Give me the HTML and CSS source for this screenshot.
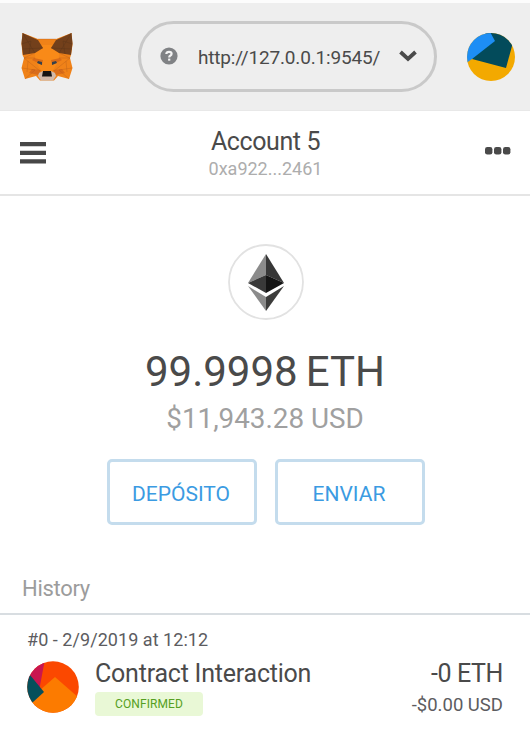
FILE: index.html
```html
<!DOCTYPE html>
<html lang="es">
<head>
<meta charset="utf-8">
<title>Wallet</title>
<link rel="stylesheet" href="styles.css">
</head>
<body>
<header class="topbar">
  <svg class="fox" viewBox="20 32 54 50" width="54" height="50">
    <path fill="#f08218" d="M22.5 33 38 39H56L71.5 33 72.5 45 71 55 70 58 72.5 68 69 79 58 76 54 80.5H40L36 76 25 79 21.5 68 24 58 22.5 55 21.5 44Z"/>
    <path fill="#f98a18" d="M34 49 42 45H52L60 49 58 62 52 72H42L36 62Z"/>
    <path fill="#73401b" d="M22.5 33 38 40 43 48 35 53 23 55 21.5 43ZM71.5 33 56 40 51 48 59 53 71 55 72.5 43Z"/>
    <path fill="#d96c19" d="M34 58 43 60 42 65 32 60ZM60 58 51 60 52 65 62 60ZM32 69 41 70 38 75 29 73ZM62 69 53 70 56 75 65 73Z"/>
    <path fill="none" stroke="#54301a" stroke-width=".5" opacity=".65" d="M22.5 33 35 53M21.5 44 31 41 29 54M22 49 43 48M71.5 33 59 53M72.5 44 63 41 65 54M72 49 51 48"/>
    <path fill="none" stroke="#a8551a" stroke-width=".5" opacity=".6" d="M38 39H56M35 53 24 58 40 71M59 53 70 58 54 71M22 68 35 70 25 79M72 68 59 70 69 79M24 58 35 58M70 58 59 58M28 61 27 72M66 61 67 72"/>
    <path fill="#d2b9a8" d="M39 73 43 71H51L55 73 56 76 53 80.5H41L38 76Z"/>
    <path fill="#36414c" d="M38 61 42 62 42 65 37 63ZM56 61 52 62 52 65 57 63Z"/>
    <path fill="#171413" d="M43 71H51L52 76.5H42Z"/>
  </svg>
  <div class="network">
    <svg class="help" viewBox="0 0 18 18" width="18" height="18"><circle cx="9" cy="9" r="8.6" fill="#808285"/><path d="M6.3 7Q6.5 4.8 9 4.8 11.6 4.8 11.6 6.8 11.6 8 10.2 8.7 9.2 9.2 9.2 10.4" fill="none" stroke="#f3f3f3" stroke-width="2.2"/><path d="M8.1 11.6h2.2v2.1H8.1z" fill="#f3f3f3"/></svg>
    <span class="url">http://127.0.0.1:9545/</span>
    <svg class="chevron" viewBox="0 0 18 12" width="18" height="12"><path d="M1.5 2 9 9 16.5 2" fill="none" stroke="#4a4a4a" stroke-width="3.8"/></svg>
  </div>
  <svg class="avatar" viewBox="0 0 48 48" width="48" height="48">
    <clipPath id="user-circle"><circle cx="24" cy="24" r="24"/></clipPath>
    <g clip-path="url(#user-circle)"><path fill="#f3a900" d="M0 0h48v48H0z"/><path fill="#034b5b" d="M20-3H52L45 13 39 35 5 26Z"/><path fill="#1d8ef5" d="M-2 31V-3H22L28 8 5 26Z"/></g>
  </svg>
</header>
<section class="account">
  <svg class="menu" viewBox="0 0 26 22" width="26" height="22"><path fill="#474747" d="M0 0h26v4.3H0zM0 8.7h26V13H0zM0 17.3h26v4.3H0z"/></svg>
  <div class="identity"><div class="name">Account 5</div><div class="address">0xa922...2461</div></div>
  <svg class="more" viewBox="0 0 26 8" width="26" height="8"><g fill="#4a4a4a"><rect width="7.4" height="7.6" rx="2.3"/><rect x="9" width="7.4" height="7.6" rx="2.3"/><rect x="18" width="7.4" height="7.6" rx="2.3"/></g></svg>
</section>
<main class="balance">
  <svg class="token" viewBox="0 0 76 76" width="76" height="76"><circle cx="38" cy="38" r="37" fill="#fff" stroke="#e2e2e2" stroke-width="1.8"/><path fill="#8b8b8b" d="M38 10 20 39 38 31Z"/><path fill="#373737" d="M38 10 56 39 38 31Z"/><path fill="#393939" d="M20 39 38 31V49Z"/><path fill="#141414" d="M56 39 38 31V49Z"/><path fill="#8b8b8b" d="M20 42 38 53V67Z"/><path fill="#3c3c3b" d="M56 42 38 53V67Z"/></svg>
  <div class="eth"><span class="amount">99.9998</span><span class="unit">ETH</span></div>
  <div class="fiat">$11,943.28 USD</div>
  <div class="actions"><button><span class="deposit">DEPÓSITO</span></button><button><span class="send">ENVIAR</span></button></div>
</main>
<section class="history">
  <h2><span>History</span></h2>
  <div class="transaction">
    <div class="date"><span>#0 - 2/9/2019 at 12:12</span></div>
    <div class="details">
      <svg class="contract" viewBox="0 0 52 52" width="52" height="52"><clipPath id="contract-circle"><circle cx="26" cy="26" r="25.8"/></clipPath><g clip-path="url(#contract-circle)"><path fill="#fb4800" d="M0 0h52v52H0z"/><path fill="#c9164f" d="M-2-2H18L12 30-2 18Z"/><path fill="#fc7b00" d="M28 16 52 37V56H0V46L12 30Z"/><path fill="#064f5b" d="M3 14 17 31 5 42-4 46V14Z"/></g></svg>
      <div class="description"><div class="title"><span>Contract Interaction</span></div><div class="status">CONFIRMED</div></div>
      <div class="values"><div class="value">-0 ETH</div><div class="usd">-$0.00 USD</div></div>
    </div>
  </div>
</section>
</body>
</html>
```
FILE: styles.css
```css
* { box-sizing: border-box; }
body { margin: 0; background: #fff; color: #4a4a4a; font-family: Roboto, "Liberation Sans", sans-serif; overflow: hidden; }
svg { display: block; flex: none; }
.topbar { height: 111px; border-top: 3px solid #fcfcfc; border-bottom: 1px solid #e8e8e8; background: #eee; display: flex; padding: 0 14px 0 20px; }
.fox { margin-top: 29px; }
.network { margin: 18px 0 0 64px; width: 299px; height: 71px; border: 3px solid #c9c9c9; border-radius: 36px; display: flex; align-items: center; padding: 0 15px 0 19px; }
.help { margin-top: -1px; }
.url { margin-left: 20px; width: 184px; font-size: 19px; line-height: 24px; white-space: nowrap; letter-spacing: -.18px; margin-top: 2px; }
.chevron { margin: -1px 0 0 17px; }
.avatar { margin: 30px 0 0 30px; }
.account { height: 85px; border-bottom: 2px solid #e5e5e5; display: flex; padding: 0 19px 0 20px; justify-content: space-between; }
.menu { margin-top: 31px; }
.identity { text-align: center; padding-top: 16px; }
.name { font-size: 25px; line-height: 30px; letter-spacing: -.4px; }
.address { color: #adadad; font-size: 18px; line-height: 24px; }
.more { margin-top: 36px; }
.balance { height: 372px; padding: 48px 0 0 2px; display: flex; flex-direction: column; align-items: center; }
.eth { display: flex; gap: 8px; margin: 27px 2px 0 0; font-size: 42px; line-height: 50px; white-space: nowrap; }
.fiat { color: #a0a0a0; font-size: 27.8px; line-height: 32px; margin: 6px 2px 0 0; }
.actions { display: flex; gap: 18px; margin-top: 24px; }
.actions button { width: 150px; height: 66px; border: 3px solid #c4dced; border-radius: 5px; background: #fff; color: #3b9be2; font-family: inherit; font-size: 21px; line-height: 26px; padding: 3px 2px 0 0; }
.history h2 { height: 47px; margin: 0; padding: 7px 0 0 22px; border-bottom: 2px solid #d8dde1; font-size: 22px; line-height: 28px; font-weight: 400; letter-spacing: -.3px; color: #9c9c9c; }
.transaction { padding: 13px 27px 0; }
.date { font-size: 18px; line-height: 24px; letter-spacing: .05px; color: #5c5c60; }
.details { display: flex; margin-top: 9px; }
.description { margin: -2px 0 0 16px; }
.title { font-size: 25px; line-height: 30px; white-space: nowrap; letter-spacing: -.22px; }
.status { width: 108px; height: 24px; margin-top: 3px; border-radius: 4px; background: #e9f8d6; color: #559f22; font-size: 12px; line-height: 25px; letter-spacing: .1px; text-align: center; }
.values { margin: -2px 0 0 auto; text-align: right; }
.value { font-size: 25px; line-height: 30px; letter-spacing: -.4px; }
.usd { font-size: 18.5px; line-height: 24px; margin-top: 4px; color: #5c5c60; }
```
